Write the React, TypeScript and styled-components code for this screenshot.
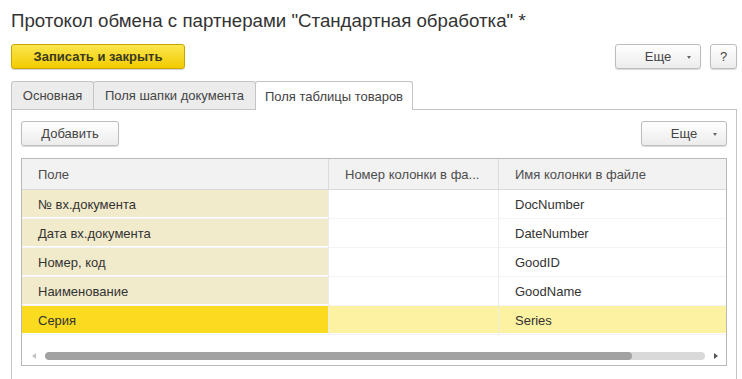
import React from 'react'
import styled, { createGlobalStyle } from 'styled-components'

const GlobalStyle = createGlobalStyle`
  html, body {
    margin: 0;
    padding: 0;
    background: #fff;
    font-family: Arial, "Liberation Sans", sans-serif;
    color: #333;
  }
`

interface Row {
  field: string
  column: string
  name: string
  selected?: boolean
}

const rows: Row[] = [
  { field: '№ вх.документа', column: '', name: 'DocNumber' },
  { field: 'Дата вх.документа', column: '', name: 'DateNumber' },
  { field: 'Номер, код', column: '', name: 'GoodID' },
  { field: 'Наименование', column: '', name: 'GoodName' },
  { field: 'Серия', column: '', name: 'Series', selected: true }
]

const tabs = [
  { title: 'Основная', width: 83 },
  { title: 'Поля шапки документа', width: 163 },
  { title: 'Поля таблицы товаров', width: 158 }
]

export default function App() {
  return (
    <>
      <GlobalStyle />
      <Page>
        <Title>Протокол обмена с партнерами "Стандартная обработка" *</Title>
        <Toolbar>
          <PrimaryButton>Записать и закрыть</PrimaryButton>
          <Spacer />
          <Button $width={86}>
            <span>Еще</span>
            <Caret />
          </Button>
          <Button $width={27}>?</Button>
        </Toolbar>

        <TabBar>
          {tabs.map((t, i) => (
            <Tab key={t.title} $width={t.width} $active={i === 2}>{t.title}</Tab>
          ))}
        </TabBar>

        <Panel>
          <Toolbar $inner>
            <Button $width={98}>Добавить</Button>
            <Spacer />
            <Button $width={86}>
              <span>Еще</span>
              <Caret />
            </Button>
          </Toolbar>

          <Table>
            <HeadRow>
              <HeadCell>Поле</HeadCell>
              <HeadCell>Номер колонки в фа...</HeadCell>
              <HeadCell $last>Имя колонки в файле</HeadCell>
            </HeadRow>
            {rows.map(r => (
              <BodyRow key={r.name}>
                <Cell $kind={r.selected ? 'keySelected' : 'key'}>{r.field}</Cell>
                <Cell $kind={r.selected ? 'selected' : 'plain'}>{r.column}</Cell>
                <Cell $kind={r.selected ? 'selected' : 'plain'}>{r.name}</Cell>
              </BodyRow>
            ))}
            <ScrollBar>
              <Arrow $dir="left" />
              <Track>
                <Thumb style={{ width: '89%' }} />
              </Track>
              <Arrow $dir="right" />
            </ScrollBar>
          </Table>
        </Panel>
      </Page>
    </>
  )
}

const Page = styled.div`
  padding: 9px 5px 0 11px;
  height: 379px;
  box-sizing: border-box;
  overflow: hidden;
`

const Title = styled.div`
  font-size: 18.7px;
  line-height: 24px;
  color: #333;
  white-space: nowrap;
`

const Toolbar = styled.div<{ $inner?: boolean }>`
  display: flex;
  align-items: center;
  gap: 9px;
  height: 25px;
  margin-top: ${({ $inner }) => ($inner ? '0' : '11px')};
`

const Spacer = styled.div`
  flex: 1;
`

const PrimaryButton = styled.button`
  width: 174px;
  height: 25px;
  box-sizing: border-box;
  border: 1px solid #c8a800;
  border-radius: 3px;
  background: linear-gradient(#fbe64f, #f3cb00);
  box-shadow: 0 1px 1px rgba(0, 0, 0, 0.18);
  font-family: Arial, "Liberation Sans", sans-serif;
  font-weight: bold;
  font-size: 13px;
  color: #3a3a1e;
  padding: 0;
`

const Button = styled.button<{ $width: number }>`
  position: relative;
  width: ${({ $width }) => $width}px;
  height: 25px;
  box-sizing: border-box;
  border: 1px solid #bcbcbc;
  border-radius: 3px;
  background: linear-gradient(#ffffff, #ececec);
  box-shadow: 0 1px 1px rgba(0, 0, 0, 0.15);
  font-family: Arial, "Liberation Sans", sans-serif;
  font-size: 13px;
  color: #444;
  padding: 0;
  display: flex;
  align-items: center;
  justify-content: center;
`

const Caret = styled.span`
  position: absolute;
  right: 9px;
  top: 11px;
  border-left: 2.5px solid transparent;
  border-right: 2.5px solid transparent;
  border-top: 3px solid #666;
`

const TabBar = styled.div`
  display: flex;
  margin-top: 12px;
  height: 28px;
  align-items: flex-end;
`

const Tab = styled.div<{ $active?: boolean; $width: number }>`
  width: ${({ $width }) => $width}px;
  box-sizing: border-box;
  display: flex;
  align-items: center;
  justify-content: center;
  font-size: 13px;
  color: #444;
  border: 1px solid #c4c4c4;
  border-bottom: none;
  border-radius: 3px 3px 0 0;
  margin-left: -1px;
  background: ${({ $active }) => ($active ? '#fff' : '#ececec')};
  position: relative;
  z-index: ${({ $active }) => ($active ? 1 : 0)};
  margin-bottom: ${({ $active }) => ($active ? '-1px' : '0')};
  height: ${({ $active }) => ($active ? '29px' : '28px')};
  white-space: nowrap;
  &:first-child {
    margin-left: 0;
  }
`

const Panel = styled.div`
  border: 1px solid #c4c4c4;
  border-bottom: none;
  padding: 11px 9px 0 9px;
  height: 300px;
`

const Table = styled.div`
  margin-top: 12px;
  border: 1px solid #b8b8b8;
  display: flex;
  flex-direction: column;
`

const HeadRow = styled.div`
  display: grid;
  grid-template-columns: 307px 170px 1fr;
  height: 30px;
  background: #f2f2f2;
  border-bottom: 1px solid #d9d9d9;
`

const HeadCell = styled.div<{ $last?: boolean }>`
  display: flex;
  align-items: center;
  padding-left: 16px;
  font-size: 13px;
  color: #4d4d4d;
  border-right: ${({ $last }) => ($last ? 'none' : '1px solid #dcdcdc')};
  white-space: nowrap;
  overflow: hidden;
`

const BodyRow = styled.div`
  display: grid;
  grid-template-columns: 307px 170px 1fr;
  height: 29px;
`

const cellBg: Record<string, string> = {
  key: '#f2ebcb',
  keySelected: '#fadb1f',
  selected: '#fdf1a2',
  plain: '#ffffff'
}

const Cell = styled.div<{ $kind: string }>`
  display: flex;
  align-items: center;
  padding-left: 16px;
  font-size: 13px;
  color: #333;
  background: ${({ $kind }) => cellBg[$kind]};
  border-right: 1px solid #ececec;
  border-bottom: 1px solid #f4f4f4;
  box-shadow: inset 0 -1px 0 #fff;
  &:last-child {
    border-right: none;
  }
`

const ScrollBar = styled.div`
  display: flex;
  align-items: center;
  height: 30px;
  padding: 11px 8px 0 10px;
  box-sizing: border-box;
  gap: 9px;
`

const Arrow = styled.span<{ $dir: 'left' | 'right' }>`
  width: 0;
  height: 0;
  border-top: 3px solid transparent;
  border-bottom: 3px solid transparent;
  ${({ $dir }) =>
    $dir === 'left'
      ? 'border-right: 4px solid #c4c4c4;'
      : 'border-left: 4px solid #555;'}
`

const Track = styled.div`
  flex: 1;
  height: 8px;
  border-radius: 4px;
  background: #d9d9d9;
  overflow: hidden;
`

const Thumb = styled.div`
  height: 100%;
  border-radius: 4px;
  background: #a2a2a2;
`
